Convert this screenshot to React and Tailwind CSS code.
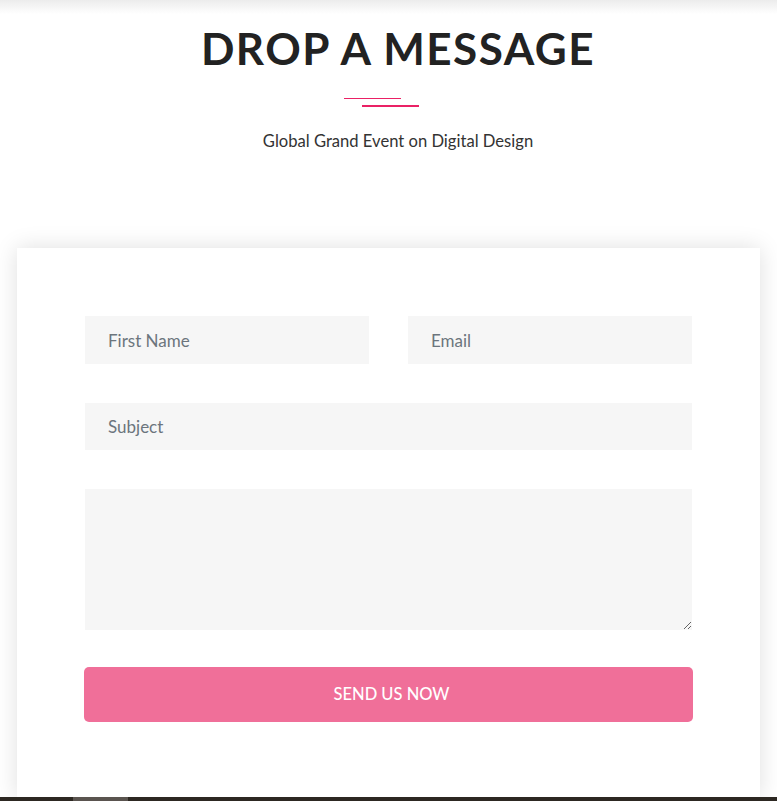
export default function App() {
  return (
    <div className="relative min-h-[801px] bg-white overflow-hidden" style={{ fontFamily: 'Lato, "Liberation Sans", sans-serif' }}>
      <div className="h-[14px] bg-gradient-to-b from-[#ececec] to-white" />

      <div className="flex flex-col items-center pl-[19px]">
        <h1 className="mt-[8px] text-[44px] leading-[52px] font-bold tracking-[1.5px] text-[#222222]">DROP A MESSAGE</h1>
        <div className="mt-[24px] mr-[33px] flex flex-col">
          <div className="w-[57px] h-px bg-[#ea2165]" />
          <div className="ml-[18px] mt-[6px] w-[57px] h-[2px] bg-[#ea2165]" />
        </div>
        <p className="mt-[22px] text-[16.6px] leading-[24px] text-[#333333]">Global Grand Event on Digital Design</p>
      </div>

      <div className="mx-[17px] mt-[95px] bg-white shadow-[0_0_22px_rgba(0,0,0,0.13)] px-[68px] pt-[68px] pb-[75px]">
        <div className="grid grid-cols-2 gap-x-[39px]">
          <input placeholder="First Name" className="h-[48px] bg-[#f6f6f6] px-[23px] text-[17px] text-[#333] placeholder:text-[#6c757d] outline-none" />
          <input placeholder="Email" className="h-[48px] bg-[#f6f6f6] px-[23px] text-[17px] text-[#333] placeholder:text-[#6c757d] outline-none" />
        </div>
        <input placeholder="Subject" className="mt-[39px] block w-full h-[47px] bg-[#f6f6f6] px-[23px] text-[17px] text-[#333] placeholder:text-[#6c757d] outline-none" />
        <textarea className="mt-[39px] block w-full h-[141px] bg-[#f6f6f6] px-[23px] py-3 text-[17px] outline-none" />
        <button className="mt-[37px] -mx-px w-[calc(100%+2px)] h-[55px] rounded-[5px] bg-[#f06f99] pl-[6px] text-white text-[16.5px] font-medium uppercase">Send Us Now</button>
      </div>

      <div className="absolute left-0 right-0 top-[797px] h-[4px] bg-[#2d2822] flex">
        <div className="ml-[73px] w-[55px] bg-[#5a544f]" />
      </div>
    </div>
  )
}
